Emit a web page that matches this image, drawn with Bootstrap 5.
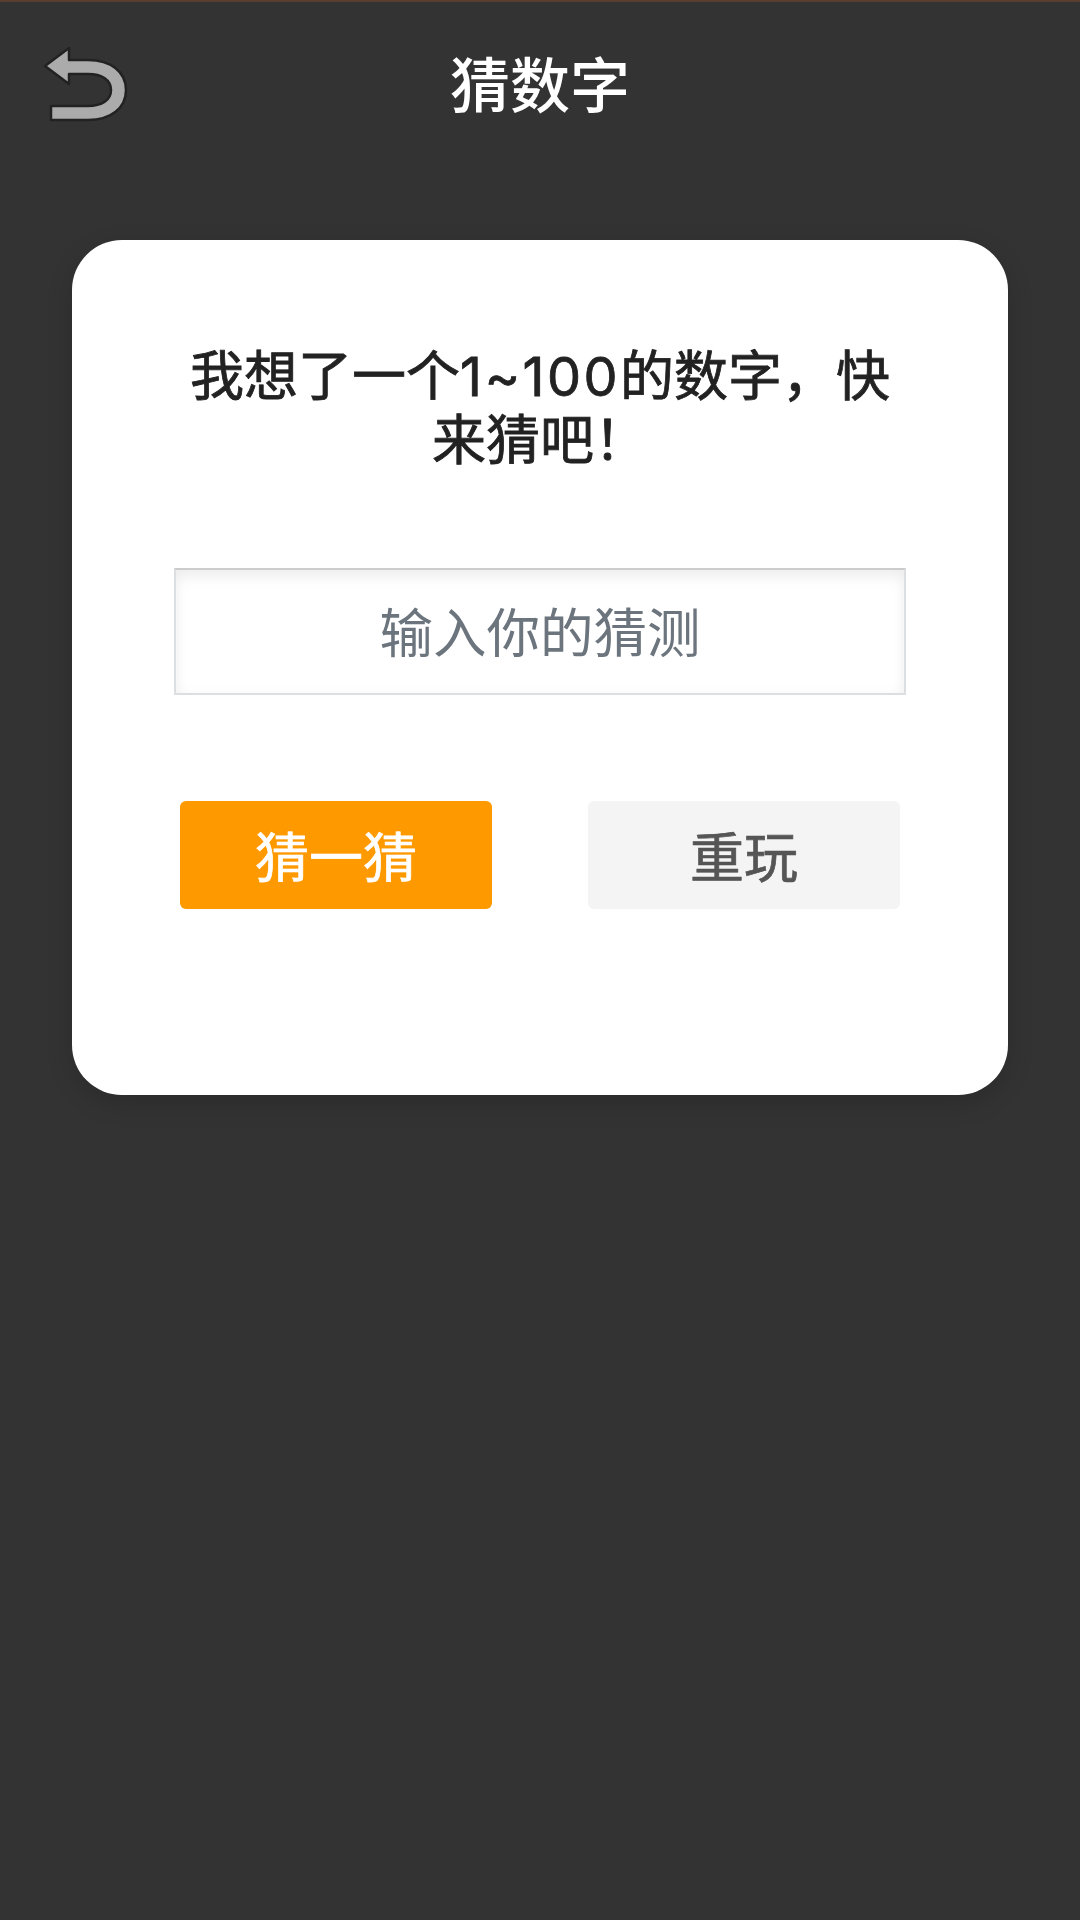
<!DOCTYPE html>
<html lang="zh">
<head>
<meta charset="utf-8">
<title>猜数字</title>
<link rel="stylesheet" href="https://cdn.jsdelivr.net/npm/bootstrap@5.3.0/dist/css/bootstrap.min.css">
<style>
html, body { height: 100%; }
body { background: #333; font-family: "Inter", "Noto Sans CJK SC", sans-serif; border-top: 2px solid #5a3d2e; }
.topbar { height: 174px; position: relative; }
.back-ico { position: absolute; left: 40px; top: 40px; width: 96px; height: 84px; }
.page-title { font-size: 60px; font-weight: 500; line-height: 1; color: #fff; margin: 54px 0 0; }
.play-card { margin: 64px 72px 0; height: 855px; background: #fff; border-radius: 50px; box-shadow: 0 8px 26px rgba(0,0,0,.16); padding: 105px 102px 0; }
.ask { font-size: 54px; line-height: 64px; font-weight: 400; color: #222; text-align: center; margin: 0; -webkit-text-stroke: .8px currentColor; }
.ask-num { letter-spacing: 2.4px; }
.guess-input.form-control { height: 127px; margin-top: 95px; padding-top: 4px; padding-bottom: 0; border-radius: 0; border: 2px solid #dcdfe2; border-top-color: #ccc; font-size: 53.5px; text-align: center; box-shadow: inset 0 8px 14px rgba(0,0,0,.06), inset 0 0 14px rgba(0,0,0,.025); }
.guess-input.form-control::placeholder { color: #6c757d; }
.act-row { margin-top: 106px; padding: 0 6px; }
.act-btn { width: 312px; height: 108px; border: 0; border-radius: 6px; font-size: 54px; line-height: 1; font-weight: 400; padding: 8px 0 0; -webkit-text-stroke: .7px currentColor; }
.act-go { background: #ff9900; color: #fff; }
.act-go:hover { background: #ff9900; color: #fff; }
.act-re { background: #f4f4f4; color: #555; }
.act-re:hover { background: #f4f4f4; color: #555; }
</style>
</head>
<body>
<header class="topbar d-flex justify-content-center">
  <svg class="back-ico" viewBox="40 42 96 84" aria-label="返回">
    <path d="M45 66 L69 48 V60 H88 C111 60 126 72 126 90 C126 108 111 120 88 120 H51 V106 H88 C102 106 111 100 111 90 C111 80 102 74 88 74 H69 V84 Z" fill="#ababab" stroke="#222" stroke-width="2.5" stroke-linejoin="round"/>
  </svg>
  <h1 class="page-title">猜数字</h1>
</header>
<main class="play-card">
  <p class="ask"><span>我想了一个</span><span class="ask-num">1~100</span><span>的数字，快</span><span>来猜吧！</span></p>
  <input class="form-control guess-input" type="text" placeholder="输入你的猜测">
  <div class="act-row d-flex justify-content-between">
    <button class="btn act-btn act-go" type="button">猜一猜</button>
    <button class="btn act-btn act-re" type="button">重玩</button>
  </div>
</main>
<script src="https://cdn.jsdelivr.net/npm/bootstrap@5.3.0/dist/js/bootstrap.bundle.min.js"></script>
</body>
</html>
